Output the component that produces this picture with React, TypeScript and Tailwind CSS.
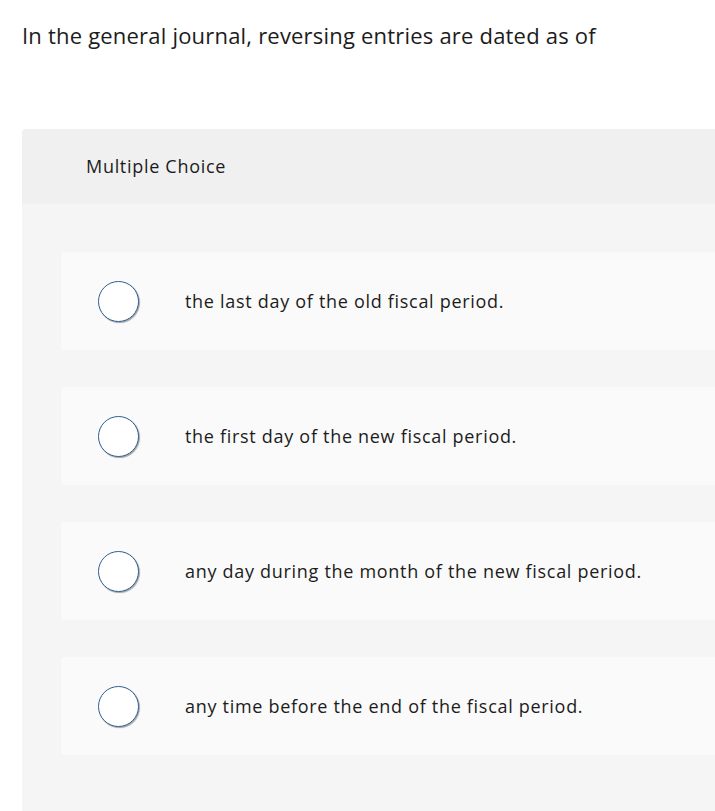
const options = [
  "the last day of the old fiscal period.",
  "the first day of the new fiscal period.",
  "any day during the month of the new fiscal period.",
  "any time before the end of the fiscal period.",
];

export default function App() {
  return (
    <div className="w-[715px] h-[811px] overflow-hidden bg-white font-['Open_Sans','Lato',sans-serif] text-[#1c1c1c]">
      <h1 className="pl-[22px] pt-[21px] text-[22px] leading-[28px] tracking-[0.2px]">
        In the general journal, reversing entries are dated as of
      </h1>

      {/* question panel */}
      <div className="ml-[22px] mt-[80px] w-[740px] rounded-tl-[4px] bg-[#f5f5f5] pb-[60px]">
        <div className="flex h-[75px] items-center rounded-tl-[4px] bg-[#f0f0f0] pl-[64px] text-[18px] tracking-[0.7px]">
          Multiple Choice
        </div>

        <div className="flex flex-col gap-[37px] pl-[39px] pt-[48px]">
          {options.map((text) => (
            <label
              key={text}
              className="flex h-[98px] items-center rounded-l-[4px] bg-[#fafafa] pl-[37px]"
            >
              <span className="h-[41px] w-[41px] shrink-0 rounded-full border-[1.5px] border-[#2e5f96] bg-white shadow-[1px_1px_1px_rgba(0,0,0,0.35)]" />
              <span className="ml-[46px] text-[18px] tracking-[0.7px]">{text}</span>
            </label>
          ))}
        </div>
      </div>
    </div>
  );
}
